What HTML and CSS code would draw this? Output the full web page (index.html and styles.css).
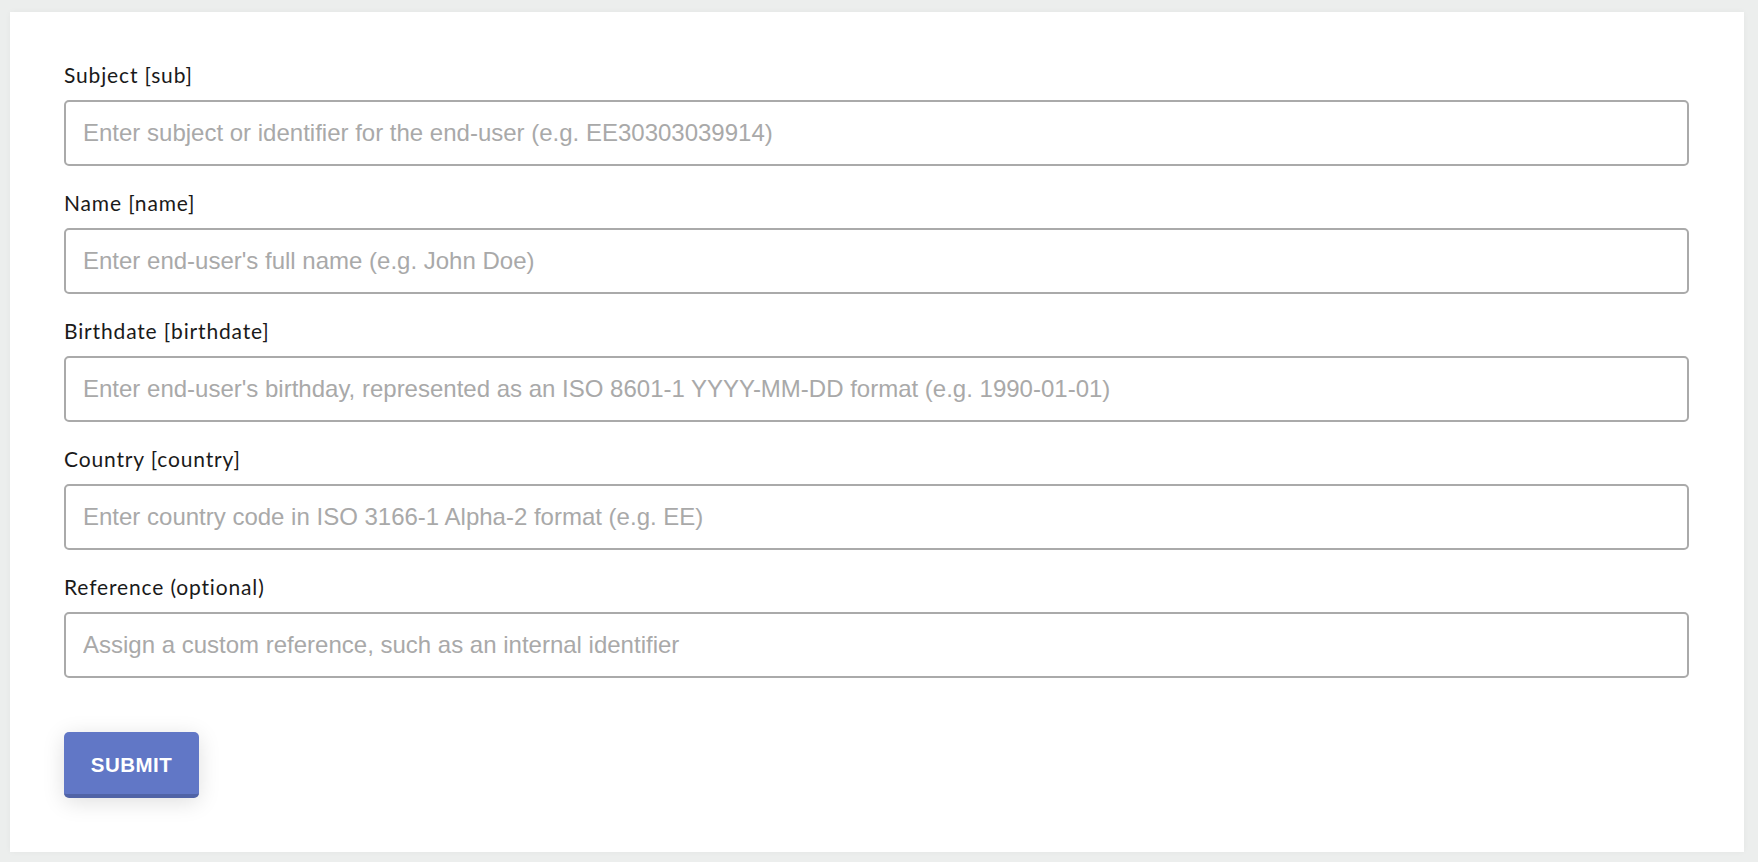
FILE: index.html
```html
<!DOCTYPE html>
<html lang="en">
<head>
<meta charset="utf-8">
<title>Form</title>
<link rel="stylesheet" href="styles.css">
</head>
<body>
<main class="card">
  <form class="form">
    <div class="field">
      <label class="label" for="sub">Subject [sub]</label>
      <input class="input" id="sub" type="text" placeholder="Enter subject or identifier for the end-user (e.g. EE30303039914)">
    </div>
    <div class="field">
      <label class="label" for="name">Name [name]</label>
      <input class="input" id="name" type="text" placeholder="Enter end-user's full name (e.g. John Doe)">
    </div>
    <div class="field">
      <label class="label" for="birthdate">Birthdate [birthdate]</label>
      <input class="input" id="birthdate" type="text" placeholder="Enter end-user's birthday, represented as an ISO 8601-1 YYYY-MM-DD format (e.g. 1990-01-01)">
    </div>
    <div class="field">
      <label class="label" for="country">Country [country]</label>
      <input class="input" id="country" type="text" placeholder="Enter country code in ISO 3166-1 Alpha-2 format (e.g. EE)">
    </div>
    <div class="field">
      <label class="label" for="reference">Reference (optional)</label>
      <input class="input" id="reference" type="text" placeholder="Assign a custom reference, such as an internal identifier">
    </div>
    <div class="actions">
      <button class="submit" type="submit">SUBMIT</button>
    </div>
  </form>
</main>
</body>
</html>
```

FILE: styles.css
```css
html, body {
  margin: 0;
  height: 100%;
}

body {
  background: #eceeed;
  padding: 12px 14px 10px 10px;
  box-sizing: border-box;
  font-family: Lato, "Noto Sans", sans-serif;
}

.card {
  background: #ffffff;
  height: 840px;
  box-sizing: border-box;
  padding: 51px 55px 0 54px;
  box-shadow: 0 0 6px rgba(0, 0, 0, 0.04);
}

.form {
  display: flex;
  flex-direction: column;
}

.field {
  display: flex;
  flex-direction: column;
  gap: 13px;
  margin-bottom: 25px;
}

.label {
  font-size: 21px;
  line-height: 24px;
  letter-spacing: 0.85px;
  color: #1a1a1a;
}

.input {
  height: 66px;
  box-sizing: border-box;
  border: 2px solid #aaaaaa;
  border-radius: 5px;
  padding: 0 17px;
  font-family: "Liberation Sans", Arial, sans-serif;
  font-size: 24px;
  color: #333;
  outline: none;
}

.input::placeholder {
  color: #a9a9a9;
}

.actions {
  padding-top: 29px;
}

.submit {
  width: 135px;
  height: 66px;
  border: none;
  border-bottom: 4px solid #5063a6;
  border-radius: 5px;
  background: #6177c6;
  color: #ffffff;
  font-family: "Liberation Sans", Arial, sans-serif;
  font-weight: bold;
  font-size: 20.5px;
  letter-spacing: 0.5px;
  padding: 4px 0 0;
  box-shadow: 0 4px 22px rgba(0, 0, 0, 0.13);
  cursor: pointer;
}
```
